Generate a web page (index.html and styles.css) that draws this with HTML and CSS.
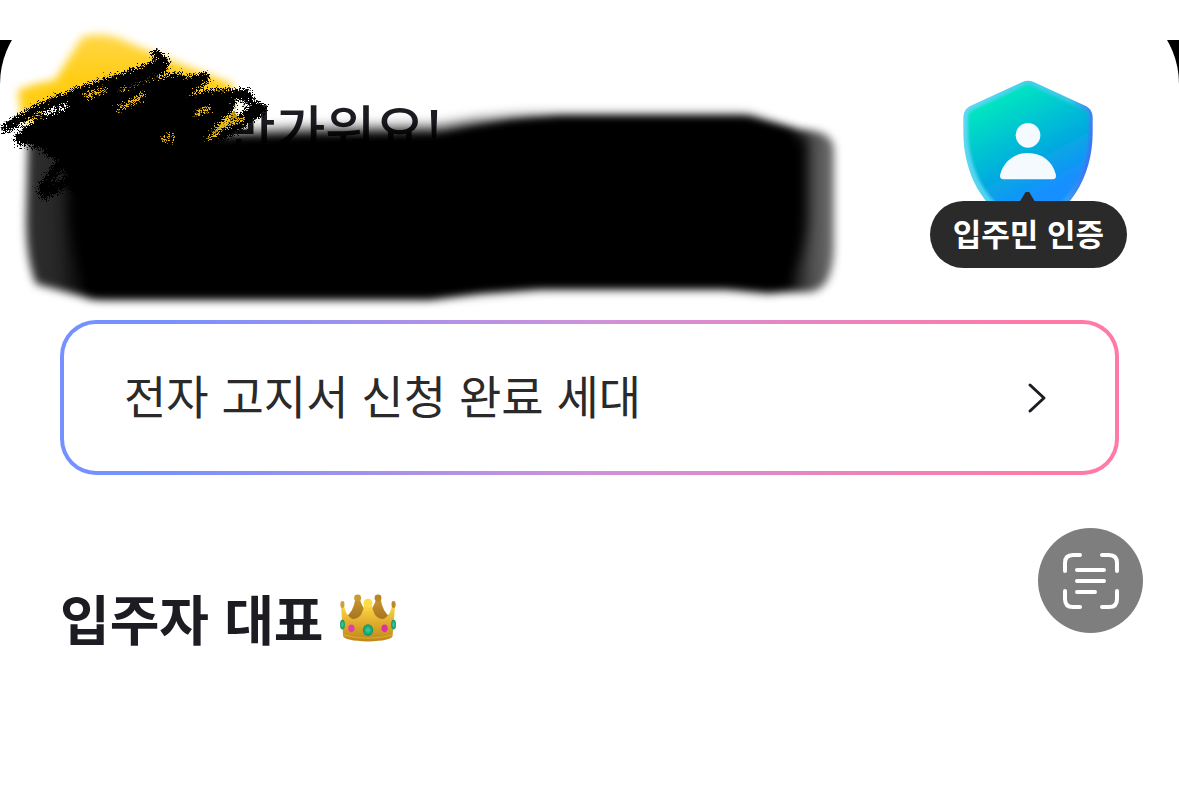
FILE: index.html
```html
<!DOCTYPE html>
<html lang="ko">
<head>
  <meta charset="UTF-8">
  <meta name="viewport" content="width=device-width, initial-scale=1">
  <title>입주민 홈</title>
  <link rel="stylesheet" href="styles.css">
</head>
<body>
  <div class="backdrop">
    <main class="sheet">
      <header class="header">
        <h1 class="greeting">반가워요!</h1>
        <button type="button" class="badge">
          <svg class="badge-shield" viewBox="162 58 390 450" aria-hidden="true">
            <defs>
              <linearGradient id="shield" x1="0.2" y1="0" x2="0.65" y2="0.95">
                <stop offset="0.1" stop-color="#00e5c0"/>
                <stop offset="0.6" stop-color="#05a9e0"/>
                <stop offset="0.85" stop-color="#168fff"/>
              </linearGradient>
              <linearGradient id="rim" x1="0" y1="0.3" x2="1" y2="0.5">
                <stop offset="0" stop-color="#5ed8f2"/>
                <stop offset="0.75" stop-color="#35c9e6"/>
                <stop offset="1" stop-color="#3b6cf5"/>
              </linearGradient>
              <filter id="soft"><feGaussianBlur stdDeviation="4"/></filter>
            </defs>
            <path d="M340 64Q357 56 374 64L532 137Q550 147 551 168V215C551 350 480 470 357 505C234 470 163 350 163 215V168Q164 147 182 137Z" fill="url(#rim)"/>
            <path d="M344 76Q357 69 370 76L528 149Q540 156 540 172V215C538 340 470 452 357 488C246 452 179 340 177 215V172Q177 156 189 149Z" fill="url(#shield)" filter="url(#soft)"/>
            <circle cx="357" cy="224" r="37" fill="#f5faff"/>
            <path d="M284 356Q270 356 274 340C284 302 316 277 357 277S430 302 440 340Q444 356 430 356Z" fill="#f5faff"/>
          </svg>
          <span class="badge-label">입주민 인증</span>
        </button>
      </header>

      <a class="notice" href="#">
        <span class="notice-text">전자 고지서 신청 완료 세대</span>
        <svg class="notice-arrow" viewBox="0 0 20 32" aria-hidden="true">
          <path d="M3 3L17 16L3 29"/>
        </svg>
      </a>

      <h2 class="section-title">
        입주자 대표
        <svg class="crown" viewBox="32 36 162 138" aria-hidden="true">
          <defs>
            <linearGradient id="gold" x1="0" y1="0" x2="0" y2="1">
              <stop offset="0" stop-color="#ffda45"/>
              <stop offset="0.55" stop-color="#dda82b"/>
              <stop offset="1" stop-color="#bd8619"/>
            </linearGradient>
            <linearGradient id="gold-back" x1="0" y1="0" x2="0" y2="1">
              <stop offset="0" stop-color="#c5932c"/>
              <stop offset="1" stop-color="#936018"/>
            </linearGradient>
            <radialGradient id="green"><stop offset="0" stop-color="#3fd0a0"/><stop offset="1" stop-color="#0c9465"/></radialGradient>
          </defs>
          <path d="M50 100Q70 88 76 52H90Q96 74 113 90Q130 74 136 52H150Q156 88 176 100L176 145H50Z" fill="url(#gold-back)"/>
          <circle cx="83" cy="47" r="10" fill="#c99a2d"/>
          <circle cx="142" cy="47" r="10" fill="#b98624"/>
          <path d="M35 72H44Q50 100 68 108C90 108 98 92 102 66H124C128 92 136 108 158 108Q176 100 182 72H191L184 158Q180 171 113 173Q46 171 41 158Z" fill="url(#gold)"/>
          <path d="M42 154Q113 173 184 154" fill="none" stroke="#e6b93c" stroke-width="2"/>
          <ellipse cx="39" cy="66" rx="6" ry="10" fill="#cda038"/>
          <ellipse cx="187" cy="66" rx="6" ry="10" fill="#bc8925"/>
          <circle cx="113" cy="62" r="13" fill="#ffdc46"/>
          <ellipse cx="113" cy="140" rx="15" ry="17" fill="url(#green)"/>
          <ellipse cx="39" cy="124" rx="7" ry="14" fill="url(#green)"/>
          <ellipse cx="187" cy="124" rx="7" ry="14" fill="url(#green)"/>
          <ellipse cx="65" cy="135" rx="9" ry="11" fill="#e43cae"/>
          <ellipse cx="161" cy="135" rx="9" ry="11" fill="#d733a5"/>
        </svg>
      </h2>
    </main>
  </div>

  <!-- marker strokes over the name and address -->
  <svg class="marker" width="860" height="320" viewBox="0 0 860 320" color-interpolation-filters="sRGB" aria-hidden="true">
    <defs>
      <filter id="blur4" x="-10%" y="-10%" width="120%" height="120%"><feGaussianBlur stdDeviation="4"/></filter>
      <filter id="blur7" x="-10%" y="-20%" width="120%" height="140%"><feGaussianBlur stdDeviation="7"/></filter>
      <filter id="rough" x="-10%" y="-10%" width="120%" height="120%">
        <feTurbulence type="fractalNoise" baseFrequency="0.6" numOctaves="3" seed="4"/>
        <feDisplacementMap in="SourceGraphic" scale="48" xChannelSelector="R" yChannelSelector="G"/>
      </filter>
      <linearGradient id="yellow" x1="0" y1="0" x2="0" y2="1">
        <stop offset="0" stop-color="#ffd640"/>
        <stop offset="0.4" stop-color="#ffcc0c"/>
      </linearGradient>
      <linearGradient id="edge" gradientUnits="userSpaceOnUse" x1="25" y1="0" x2="835" y2="0">
        <stop offset="0" stop-color="#303030"/>
        <stop offset="0.04" stop-color="#262626"/>
        <stop offset="0.08" stop-color="#000"/>
        <stop offset="0.94" stop-color="#000"/>
        <stop offset="0.97" stop-color="#4c4c4c"/>
        <stop offset="1" stop-color="#707070"/>
      </linearGradient>
    </defs>
    <path d="M82 37Q98 32 118 38L170 60L232 84L238 124L205 145H120L22 120L18 90Q40 82 55 80Z" fill="url(#yellow)" filter="url(#blur4)" opacity="0.96"/>
    <path d="M28 136L225 142L300 140L440 138Q480 128 510 122L560 117H748L800 130Q834 130 834 150V250Q832 292 808 292L770 292L725 288H540L480 292L430 299H92L36 284Q26 260 26 220Z" fill="url(#edge)" filter="url(#blur4)"/>
    <path d="M70 140L215 134L300 130L440 128Q480 120 530 118H748L806 140V220Q802 270 772 289L730 285H540Q480 290 430 294H96Q75 270 70 220Z" filter="url(#blur7)"/>
    <g transform="translate(4 24) scale(0.3333)" filter="url(#rough)" fill="none" stroke="#000" stroke-width="46" stroke-linecap="round" stroke-linejoin="round">
      <path d="M5 312L95 258L220 205L350 162L445 134L484 112L455 92" stroke-width="28"/>
      <path d="M470 128L300 194L160 262L55 345L200 300L400 205L520 168"/>
      <path d="M95 355L260 260L420 225L520 180L600 162L440 275L610 214L725 212L745 255" stroke-width="34"/>
      <path d="M765 255L700 300L640 340L560 360L420 400L340 460L230 500" stroke-width="40"/>
      <path d="M180 400L115 495L125 510L240 440L210 490" stroke-width="30"/>
      <path d="M60 330L200 235L380 200L450 165L520 180L560 225L680 225L690 250L600 335L520 380L420 420L340 480L220 490L170 410L130 390Z" fill="#000" stroke-width="10"/>
      <path d="M345 252Q390 240 415 212M250 215L300 198M615 345L655 310L715 285M580 270L612 255M480 345L505 340" stroke="#eebc0c" stroke-width="10"/>
      <path d="M120 270L190 246M695 258L732 244" stroke="#fff" stroke-width="10"/>
    </g>
  </svg>

  <button type="button" class="scan" aria-label="텍스트 스캔">
    <svg viewBox="0 0 56 56" aria-hidden="true">
      <path d="M2 18V10Q2 2 10 2H17M39 2H46Q54 2 54 10V18M54 38V46Q54 54 46 54H39M17 54H10Q2 54 2 46V38M14 17H41M14 28H41M14 39H32"/>
    </svg>
  </button>
</body>
</html>
```
FILE: styles.css
```css
* {
  box-sizing: border-box;
}
body {
  margin: 0;
  padding-top: 40px;
  min-height: 100vh;
  position: relative;
  background: #fff;
  color: #1c1c22;
  font-family: 'Noto Sans CJK KR', 'Noto Sans', sans-serif;
}
button {
  border: none;
  padding: 0;
  background: none;
  font-family: inherit;
  cursor: pointer;
}
.backdrop {
  background: #000;
  overflow: hidden;
}
.sheet {
  margin-top: -43px;
  background: #fff;
  border-radius: 87px 87px 0 0;
  padding: 83px 60px 60px;
}
.header {
  display: flex;
  justify-content: space-between;
  align-items: flex-start;
  margin-right: -8px;
  margin-bottom: 52px;
}
.greeting {
  margin: 12px 0 0;
  padding-left: 166px;
  font-size: 54px;
  line-height: 72px;
  font-weight: 500;
}
.badge {
  display: flex;
  flex-direction: column;
  align-items: center;
}
.badge-shield {
  width: 130px;
  height: 150px;
  margin-bottom: -29px;
}
.badge-label {
  position: relative;
  padding: 0 23px 4px;
  border-radius: 34px;
  background: #2a2a2a;
  color: #fff;
  font-size: 31px;
  line-height: 63px;
  font-weight: 700;
}
.badge-label::before {
  content: '';
  position: absolute;
  left: 50%;
  top: -9px;
  width: 18px;
  height: 12px;
  margin-left: -10px;
  background: #2a2a2a;
  clip-path: polygon(40% 0, 60% 0, 100% 100%, 0 100%);
}
.notice {
  display: flex;
  justify-content: space-between;
  align-items: center;
  padding: 38px 68px 37px 60px;
  border: 4px solid transparent;
  border-radius: 36px;
  background:
    linear-gradient(#fff, #fff) padding-box,
    linear-gradient(90deg, #7491ff 8%, #cf91db 50%, #ff7aa8 92%) border-box;
  color: #2a2a2a;
  font-size: 46px;
  line-height: 64px;
  text-decoration: none;
}
.notice-text {
  padding-bottom: 8px;
}
.notice-arrow {
  width: 20px;
  height: 32px;
  fill: none;
  stroke: #1c1c22;
  stroke-width: 3;
  stroke-linecap: round;
  stroke-linejoin: round;
}
.section-title {
  display: flex;
  align-items: center;
  gap: 16px;
  margin: 107px 0 0;
  font-size: 54px;
  line-height: 72px;
  font-weight: 700;
}
.crown {
  width: 56px;
  height: 48px;
}
.marker {
  position: absolute;
  left: 0;
  top: 0;
  pointer-events: none;
}
.scan {
  position: absolute;
  right: 36px;
  top: 528px;
  display: flex;
  align-items: center;
  justify-content: center;
  width: 105px;
  height: 105px;
  border-radius: 50%;
  background: #7e7e7e;
}
.scan svg {
  width: 56px;
  height: 56px;
  fill: none;
  stroke: #fff;
  stroke-width: 4;
  stroke-linecap: round;
}
```
